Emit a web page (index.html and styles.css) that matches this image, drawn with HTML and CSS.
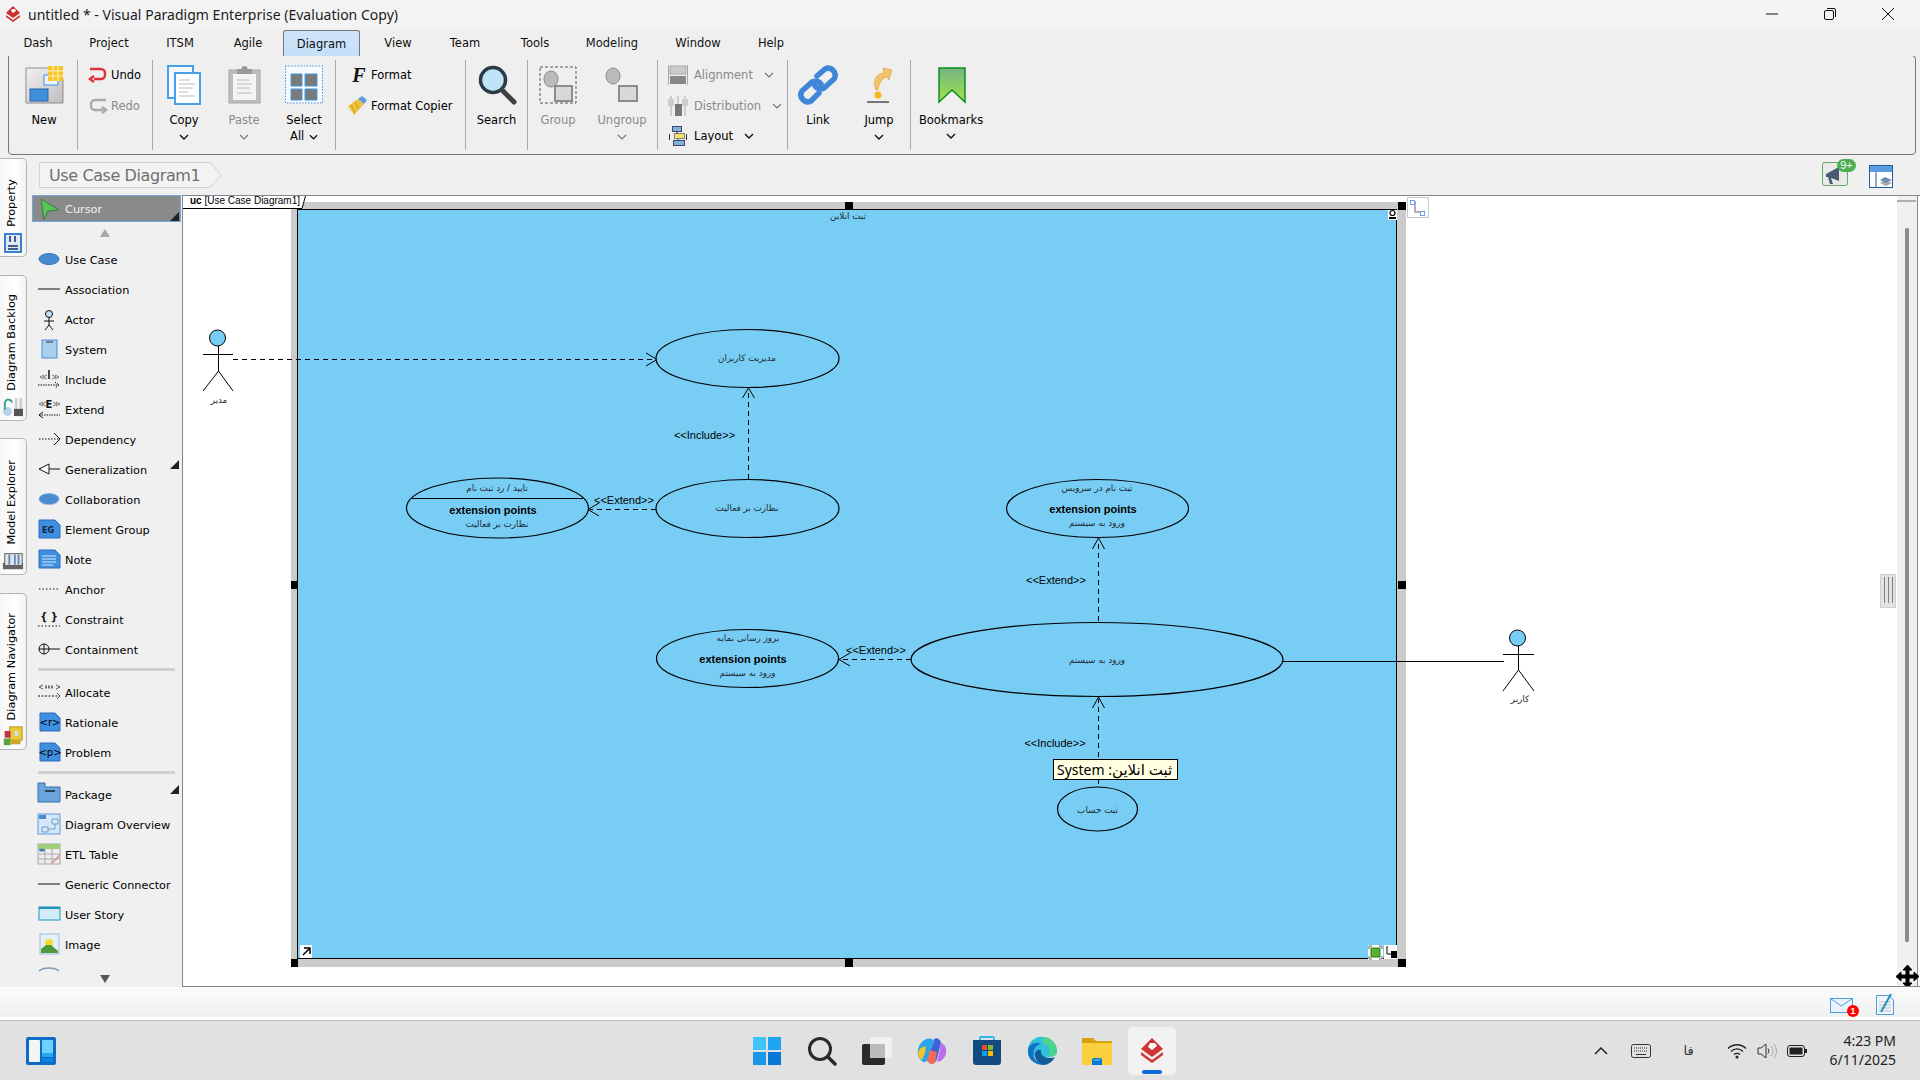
FILE: index.html
```html
<!DOCTYPE html>
<html lang="en">
<head>
<meta charset="utf-8">
<title>untitled * - Visual Paradigm Enterprise (Evaluation Copy)</title>
<link rel="stylesheet" href="styles.css">
</head>
<body>
<div class="app">
  <header class="titlebar">
    <svg class="applogo" viewBox="0 0 16 18"><path d="M8 1 15 8 8 13 1 8Z" fill="#c9302c"/><path d="M1 10 8 15 15 10 15 12 8 17 1 12Z" fill="#c9302c"/><path d="M7 4H10L11 6 8 8 6 6Z" fill="#fff"/></svg>
    <span class="apptitle">untitled * - Visual Paradigm Enterprise (Evaluation Copy)</span>
    <div class="winctl">
      <svg viewBox="0 0 14 14"><path d="M1 7H13" stroke="#111" fill="none"/></svg>
      <svg viewBox="0 0 14 14"><rect x="1.5" y="3.5" width="9" height="9" rx="1.5" fill="none" stroke="#111"/><path d="M4 1.5H11A1.5 1.5 0 0 1 12.5 3V10" fill="none" stroke="#111"/></svg>
      <svg viewBox="0 0 14 14"><path d="M1 1 13 13M13 1 1 13" stroke="#111" fill="none"/></svg>
    </div>
  </header>

  <nav class="tabs">
    <span class="tab w-dash">Dash</span><span class="tab w-project">Project</span><span class="tab w-itsm">ITSM</span><span class="tab w-agile">Agile</span><span class="tab tab-active">Diagram</span><span class="tab w-view">View</span><span class="tab w-team">Team</span><span class="tab w-tools">Tools</span><span class="tab w-modeling">Modeling</span><span class="tab w-window">Window</span><span class="tab w-help">Help</span>
  </nav>

  <section class="ribbon">
    <div class="group g-new">
      <div class="big w60">
        <svg class="bigicon" viewBox="0 0 40 40"><defs><linearGradient id="nw" x1="0" y1="0" x2="1" y2="1"><stop offset="0" stop-color="#f2f2f2"/><stop offset="1" stop-color="#bdbdbd"/></linearGradient></defs><path d="M2 3H27L39 14V38H2Z" fill="url(#nw)" stroke="#8d8d8d"/><rect x="6" y="24" width="18" height="12" fill="#3f8fdc" stroke="#2467a8"/><path d="M20 10H34V20H20Z" fill="#eef3fa" stroke="#3f8fdc"/><rect x="24" y="1" width="15" height="15" fill="#f6c52c"/><path d="M29 1V16M34 1V16M24 6H39M24 11H39" stroke="#fff3bb"/></svg>
        <span class="biglabel">New</span>
      </div>
    </div>
    <div class="group g-undo">
      <div class="rows">
        <div class="row"><svg class="smallicon" viewBox="0 0 20 16"><path d="M18 2H7A4 4 0 0 0 3 6V8A4 4 0 0 0 7 12H14M14 9 18 12 14 15" transform="matrix(-1 0 0 1 20 0)" fill="none" stroke="#e2303c" stroke-width="2.4"/></svg><span>Undo</span></div>
        <div class="row off"><svg class="smallicon" viewBox="0 0 20 16"><path d="M18 2H7A4 4 0 0 0 3 6V8A4 4 0 0 0 7 12H15M14 9 18 12 14 15" fill="none" stroke="#aaa" stroke-width="2.4"/></svg><span>Redo</span></div>
      </div>
    </div>
    <div class="group g-copy">
      <div class="big w60">
        <svg class="bigicon" viewBox="0 0 40 40"><rect x="4" y="1" width="25" height="32" fill="#f4f8fd" stroke="#46a0ea" stroke-width="2"/><rect x="11" y="8" width="25" height="31" fill="#fff" stroke="#46a0ea" stroke-width="2"/><path d="M15 15H26M15 19H31M15 23H29M15 27H24M15 31H31" stroke="#bbb"/></svg>
        <span class="biglabel">Copy</span>
        <svg class="chev" viewBox="0 0 10 6"><path d="M1 1 5 5 9 1" fill="none" stroke="#111" stroke-width="1.4"/></svg>
      </div>
      <div class="big w60 off">
        <svg class="bigicon" viewBox="0 0 40 40"><rect x="5" y="5" width="31" height="33" fill="#bdbdbd" stroke="#a5a5a5"/><rect x="9" y="9" width="23" height="26" fill="#f4f4f4"/><path d="M13 4H28V9H13Z" fill="#999"/><circle cx="20.500" cy="4" r="3" fill="#999"/><path d="M13 15H25M13 19H28M13 23H26M13 28H28" stroke="#bbb"/></svg>
        <span class="biglabel">Paste</span>
        <svg class="chev" viewBox="0 0 10 6"><path d="M1 1 5 5 9 1" fill="none" stroke="#777" stroke-width="1.2"/></svg>
      </div>
      <div class="big w60">
        <svg class="bigicon" viewBox="0 0 40 40"><rect x="1.500" y="1" width="37" height="37" fill="#f6f9fd" stroke="#4b8fe0" stroke-dasharray="1.500 1.500"/><path d="M7 9H18V21H7ZM21 9H33V21H21ZM7 24H18V35H7ZM21 24H33V35H21Z" fill="#7a7a7a" stroke="#3c9be8"/></svg>
        <span class="biglabel">Select<br>All <svg class="chev-inline" viewBox="0 0 10 6"><path d="M1 1 5 5 9 1" fill="none" stroke="#111" stroke-width="1.4"/></svg></span>
      </div>
    </div>
    <div class="group g-format">
      <div class="rows">
        <div class="row"><span class="fmt-f">F</span><span>Format</span></div>
        <div class="row"><svg class="smallicon w24" viewBox="0 0 20 20"><path d="M1 10 11 3 17 8 7 19Z" fill="#f0c23c"/><path d="M11 3 15 0 20 4 17 8Z" fill="#5d9be0"/><path d="M4 9 8 17M8 6 12 13" stroke="#c79a20"/></svg><span>Format Copier</span></div>
      </div>
    </div>
    <div class="group g-search">
      <div class="big wfull">
        <svg class="bigicon" viewBox="0 0 40 40"><circle cx="16" cy="15" r="12.500" fill="#bfe4f7" stroke="#2a3a46" stroke-width="3.500"/><path d="M25 25 37 37" stroke="#404040" stroke-width="5" stroke-linecap="round"/></svg>
        <span class="biglabel">Search</span>
      </div>
    </div>
    <div class="group g-group">
      <div class="big w60 off">
        <svg class="bigicon" viewBox="0 0 40 40"><rect x="2" y="2" width="36" height="36" fill="none" stroke="#555" stroke-dasharray="3 2"/><ellipse cx="13" cy="14" rx="7" ry="8" fill="#bbb" stroke="#8c8c8c"/><rect x="17" y="21" width="17" height="15" fill="#d8d8d8" stroke="#8c8c8c" stroke-width="2"/></svg>
        <span class="biglabel">Group</span>
      </div>
      <div class="big w68 off">
        <svg class="bigicon" viewBox="0 0 40 40"><ellipse cx="11" cy="11" rx="7" ry="8" fill="#bbb" stroke="#8c8c8c"/><rect x="17" y="21" width="18" height="15" fill="#d8d8d8" stroke="#8c8c8c" stroke-width="2"/></svg>
        <span class="biglabel">Ungroup</span>
        <svg class="chev" viewBox="0 0 10 6"><path d="M1 1 5 5 9 1" fill="none" stroke="#777" stroke-width="1.2"/></svg>
      </div>
    </div>
    <div class="group g-align">
      <div class="rows">
        <div class="row off"><svg class="smallicon w26" viewBox="0 0 20 20"><path d="M.5 0V20M19.500 0V20" stroke="#aaa"/><rect x="2" y="1" width="16" height="8" fill="#ccc" stroke="#aaa"/><rect x="2" y="11" width="16" height="8" fill="#888"/></svg><span>Alignment</span><svg class="chev-row" viewBox="0 0 10 6"><path d="M1 1 5 5 9 1" fill="none" stroke="#777" stroke-width="1.2"/></svg></div>
        <div class="row off"><svg class="smallicon w26" viewBox="0 0 20 20"><path d="M3 0V20M10 0V20M17 0V20" stroke="#aaa"/><rect x="0" y="3" width="6" height="7" fill="#ccc"/><rect x="7" y="8" width="7" height="12" fill="#777"/><rect x="14" y="3" width="6" height="7" fill="#ccc"/></svg><span>Distribution</span><svg class="chev-row" viewBox="0 0 10 6"><path d="M1 1 5 5 9 1" fill="none" stroke="#777" stroke-width="1.2"/></svg></div>
        <div class="row"><svg class="smallicon w26" viewBox="0 0 20 20"><rect x="4.500" y=".5" width="9" height="5" fill="#7fb2d8" stroke="#447"/><rect x="6.500" y="7.500" width="10" height="5" fill="#f2e27a" stroke="#886"/><rect x="5.500" y="14.500" width="11" height="5" fill="#7fb2d8" stroke="#447"/><path d="M9 5V8M10 13V15M1.500 8V14M18.500 8V14" stroke="#333"/></svg><span>Layout</span><svg class="chev-row" viewBox="0 0 10 6"><path d="M1 1 5 5 9 1" fill="none" stroke="#111" stroke-width="1.4"/></svg></div>
      </div>
    </div>
    <div class="group g-link">
      <div class="big w60">
        <svg class="bigicon" viewBox="0 0 40 40"><g fill="none" stroke="#3f86d8" stroke-width="5.500" stroke-linecap="round"><path d="M19 11 27 4A7 7 0 0 1 36 14L26 23A7 7 0 0 1 17 21"/><path d="M21 28 13 36A7 7 0 0 1 4 26L14 17A7 7 0 0 1 23 19"/></g></svg>
        <span class="biglabel">Link</span>
      </div>
      <div class="big w62">
        <svg class="bigicon" viewBox="0 0 40 40"><path d="M17 25C13 15 17 9 25 8L24 3 33 5 30 15 28 12C23 13 20 18 19 25Z" fill="#f2c26a" stroke="#e0a030" stroke-width=".6"/><circle cx="19" cy="30" r="3.500" fill="#f4b81c"/><rect x="8" y="36" width="22" height="2" fill="#777"/></svg>
        <span class="biglabel">Jump</span>
        <svg class="chev" viewBox="0 0 10 6"><path d="M1 1 5 5 9 1" fill="none" stroke="#111" stroke-width="1.4"/></svg>
      </div>
    </div>
    <div class="group g-book">
      <div class="big w80">
        <svg class="bigicon bookicon" viewBox="0 0 40 40"><defs><linearGradient id="bk" x1="0" y1="0" x2="0" y2="1"><stop offset="0" stop-color="#76b587"/><stop offset="1" stop-color="#9fe04a"/></linearGradient></defs><path d="M7 3H33V37L20 25 7 37Z" fill="url(#bk)" stroke="#0f8f1e" stroke-width="1.500"/></svg>
        <span class="biglabel bk-label">Bookmarks</span>
        <svg class="chev chev-up" viewBox="0 0 10 6"><path d="M1 1 5 5 9 1" fill="none" stroke="#111" stroke-width="1.4"/></svg>
      </div>
    </div>
  </section>

  <div class="crumbbar">
    <div class="crumb">
      <svg class="crumbshape" viewBox="0 0 183 26"><path d="M.5.5H171L182 13 171 25.500H.5Z" fill="#f3f3f3" stroke="#d2d2d2"/></svg>
      <span class="crumbtext">Use Case Diagram1</span>
    </div>
    <div class="crumbtools">
      <div class="announce">
        <svg viewBox="0 0 26 24"><rect x=".5" y=".5" width="25" height="23" rx="2" fill="#e9e9e9" stroke="#6aa868"/><path d="M4 12 17 5V19L9 16 11 22H8L6 15H4Z" fill="#4a5a70"/></svg>
        <span class="badge9">9+</span>
      </div>
      <svg class="panelicon" viewBox="0 0 24 24"><rect x=".5" y=".5" width="23" height="22" fill="#fff" stroke="#1f5f9f"/><rect x="1" y="1" width="22" height="6" fill="#5c9be0"/><path d="M7 7V23" stroke="#1f5f9f"/><path d="M16 15 23 18 17 21 11 18Z" fill="#aaa"/><path d="M16 12 23 15 17 18 11 15Z" fill="#6f8fb8"/></svg>
    </div>
  </div>

  <main class="workspace">
    <aside class="sidetabs">
      <div class="stab s-prop"><span class="stext">Property</span>
        <svg viewBox="0 0 18 20"><rect width="18" height="20" fill="#3a7fd0"/><rect x="2" y="2" width="14" height="16" fill="#e4e8ee"/><path d="M6 3V9M11 3V9M4 13H14M4 16H14" stroke="#3a5f90" stroke-width="2"/></svg></div>
      <div class="stab s-back"><span class="stext">Diagram Backlog</span>
        <svg viewBox="0 0 24 22"><circle cx="6" cy="16" r="5" fill="#b8d4ea"/><path d="M3 14V8A4 4 0 0 1 11 6" fill="none" stroke="#2f9f92" stroke-width="2"/><path d="M14 1H17V21H14ZM19 1H22V21H19Z" fill="#cfcfcf"/><path d="M13 13H23V21H13Z" fill="#555"/></svg></div>
      <div class="stab s-model"><span class="stext">Model Explorer</span>
        <svg viewBox="0 0 24 20"><rect x="1" y="12" width="22" height="7" fill="#666"/><rect x="3" y="2" width="19" height="13" fill="#e5e5e5" stroke="#555"/><path d="M8 3V14M14 3V14M18 3V14" stroke="#5b88bd" stroke-width="2"/></svg></div>
      <div class="stab s-nav"><span class="stext">Diagram Navigator</span>
        <svg viewBox="0 0 24 24"><rect x="8" y="1" width="15" height="16" fill="#e7c93a" stroke="#a58a1f"/><rect x="2" y="6" width="7" height="8" fill="#c2314a"/><rect x="1" y="15" width="8" height="8" fill="#5aa33c"/><rect x="9" y="17" width="12" height="5" fill="#c9a62c"/><rect x="14" y="6" width="4" height="6" fill="#cfe0ef"/></svg></div>
    </aside>

    <aside class="palette">
      <div class="pcursor">
        <svg class="picon" viewBox="0 0 24 24"><path d="M4 2 22 13 11 14 7 23Z" fill="#59c35c" stroke="#3c7c40"/></svg><span>Cursor</span><i class="corner"></i>
      </div>
      <div class="parrow"><i class="tri-up"></i></div>
      <div class="pitem"><svg class="picon" viewBox="0 0 24 24"><ellipse cx="12" cy="12" rx="10" ry="5.500" fill="#4a8bd0" stroke="#3878bf"/></svg><span>Use Case</span></div>
      <div class="pitem"><svg class="picon" viewBox="0 0 24 24"><path d="M1 12H23" stroke="#111"/></svg><span>Association</span></div>
      <div class="pitem"><svg class="picon" viewBox="0 0 24 24"><circle cx="12" cy="7" r="3.500" fill="#bfe0f5" stroke="#111"/><path d="M12 10V18M7 14H17M12 18 8 23M12 18 16 23" stroke="#111" fill="none"/></svg><span>Actor</span></div>
      <div class="pitem"><svg class="picon" viewBox="0 0 24 24"><rect x="5" y="3" width="15" height="18" fill="#a9d0ef" stroke="#4a8bd0"/><path d="M9 5H16" stroke="#333"/></svg><span>System</span></div>
      <div class="pitem"><svg class="picon" viewBox="0 0 24 24"><path d="M12 3V12" stroke="#111" stroke-width="1.500"/><path d="M7 7 3 9 7 11M10 7 6 9 10 11M15 7 19 9 15 11M18 7 22 9 18 11" transform="translate(0,1)" stroke="#777" fill="none"/><path d="M1 18H22M18 15 22 18 18 21" stroke="#111" stroke-dasharray="1.500 1" fill="none"/></svg><span>Include</span></div>
      <div class="pitem"><svg class="picon" viewBox="0 0 24 24"><text class="icn-t" x="12" y="11">E</text><path d="M6 5 2 7 6 9M9 5 5 7 9 9M16 5 20 7 16 9M19 5 23 7 19 9" stroke="#777" fill="none"/><path d="M2 18H23" stroke="#111" stroke-dasharray="1.500 1"/><path d="M6 15 2 18 6 21" stroke="#111" fill="none"/></svg><span>Extend</span></div>
      <div class="pitem"><svg class="picon" viewBox="0 0 24 24"><path d="M2 12H22" stroke="#111" stroke-dasharray="1.500 1.500"/><path d="M17 6 23 12 17 18" stroke="#111" fill="none"/></svg><span>Dependency</span></div>
      <div class="pitem"><i class="corner"></i><svg class="picon" viewBox="0 0 24 24"><path d="M12 7V17L2 12Z" fill="#fff" stroke="#111"/><path d="M12 12H23" stroke="#111"/></svg><span>Generalization</span></div>
      <div class="pitem"><svg class="picon" viewBox="0 0 24 24"><ellipse cx="12" cy="12" rx="10" ry="5.500" fill="#4a8bd0" stroke="#8ab4e0" stroke-dasharray="2 1"/></svg><span>Collaboration</span></div>
      <div class="pitem"><svg class="picon" viewBox="0 0 24 24"><path d="M2 3H18L23 8V21H2Z" fill="#3f8fe0" stroke="#2a6db8"/><text class="icn-t small" x="11" y="16">EG</text></svg><span>Element Group</span></div>
      <div class="pitem"><svg class="picon" viewBox="0 0 24 24"><path d="M2 3H18L23 8V21H2Z" fill="#3f8fe0" stroke="#2a6db8"/><path d="M5 9H19M5 12H19M5 15H19M5 18H16" stroke="#dcebfa"/></svg><span>Note</span></div>
      <div class="pitem"><svg class="picon" viewBox="0 0 24 24"><path d="M2 12H23" stroke="#111" stroke-dasharray="1.500 2"/></svg><span>Anchor</span></div>
      <div class="pitem"><svg class="picon" viewBox="0 0 24 24"><path d="M1 19H23" stroke="#111" stroke-dasharray="1.500 2"/><text class="icn-t" x="12" y="13">{ }</text></svg><span>Constraint</span></div>
      <div class="pitem"><svg class="picon" viewBox="0 0 24 24"><circle cx="7" cy="12" r="5" fill="none" stroke="#111"/><path d="M2 12H23M7 7V17" stroke="#111"/></svg><span>Containment</span></div>
      <div class="psep first"></div>
      <div class="pitem"><svg class="picon" viewBox="0 0 24 24"><path d="M6 5 2 7 6 9M19 5 23 7 19 9" stroke="#555" fill="none"/><path d="M8 7H17" stroke="#777" stroke-width="3" stroke-dasharray="2 1"/><path d="M1 16H23" stroke="#111" stroke-dasharray="2 1.500"/><path d="M20 13 23 16 20 19" stroke="#555" fill="none"/></svg><span>Allocate</span></div>
      <div class="pitem"><svg class="picon" viewBox="0 0 24 24"><path d="M3 3H18L23 8V21H3Z" fill="#3f8fe0" stroke="#2a6db8"/><text class="icn-t dark" x="13" y="16">&lt;r&gt;</text></svg><span>Rationale</span></div>
      <div class="pitem"><svg class="picon" viewBox="0 0 24 24"><path d="M3 3H18L23 8V21H3Z" fill="#3f8fe0" stroke="#2a6db8"/><text class="icn-t dark" x="13" y="16">&lt;p&gt;</text></svg><span>Problem</span></div>
      <div class="psep"></div>
      <div class="pitem"><i class="corner"></i><svg class="picon" viewBox="0 0 24 24"><path d="M1 1H8V5H23V20H1Z" fill="#6ba4dc" stroke="#3a6ea8"/><path d="M8 9H18" stroke="#123" stroke-width="1.500"/></svg><span>Package</span></div>
      <div class="pitem"><svg class="picon" viewBox="0 0 24 24"><rect x="1" y="2" width="22" height="20" fill="#d6e8f8" stroke="#5a9be0"/><rect x="2" y="3" width="7" height="4" fill="#4a8bd0"/><path d="M15 7H21V12H15ZM5 15H11V20H5ZM11 17H18V12" fill="none" stroke="#6d9ac8"/></svg><span>Diagram Overview</span></div>
      <div class="pitem"><svg class="picon" viewBox="0 0 24 24"><rect x="1" y="2" width="22" height="20" fill="#eee" stroke="#aaa"/><rect x="1" y="2" width="22" height="5" fill="#9fce78"/><path d="M1 12H23M1 17H23M8 7V22M15 7V22" stroke="#aaa"/><ellipse cx="5" cy="8" rx="3" ry="1.500" fill="#4a7bb0"/><path d="M15 21 23 13" stroke="#d88" stroke-width="1.500"/></svg><span>ETL Table</span></div>
      <div class="pitem"><svg class="picon" viewBox="0 0 24 24"><path d="M1 12H23" stroke="#111"/></svg><span>Generic Connector</span></div>
      <div class="pitem"><svg class="picon" viewBox="0 0 24 24"><rect x="2" y="5" width="21" height="13" fill="#d2ecf8" stroke="#1c95be"/><rect x="2" y="5" width="21" height="2" fill="#1c95be"/></svg><span>User Story</span></div>
      <div class="pitem"><svg class="picon" viewBox="0 0 24 24"><rect x="3" y="2" width="19" height="20" fill="#e4eff8" stroke="#9cc0de"/><circle cx="12" cy="11" r="4" fill="#f3dc2e"/><path d="M4 21V17L9 13 14 13 21 19V21Z" fill="#4f9a3c"/></svg><span>Image</span></div>
      <div class="ppartial"><svg class="picon" viewBox="0 0 24 24"><path d="M2 4C7 0 17 0 22 4" fill="none" stroke="#7d9ab5" stroke-width="1.500"/></svg></div>
      <div class="parrow down"><i class="tri-down"></i></div>
    </aside>

    <section class="canvas">
      <svg class="diagram" viewBox="183 196 1737 790">
        <rect class="band" x="291" y="209" width="7" height="758"/>
        <rect class="band" x="299" y="202" width="1107" height="7"/>
        <rect class="band" x="1397" y="209" width="9" height="758"/>
        <rect class="band" x="291" y="959" width="1115" height="8"/>
        <rect class="sysbox" x="297.500" y="209.500" width="1099" height="749"/>
        <path class="tabfill" d="M183 196H306L302 208H183Z"/>
        <path class="ln" d="M183 208.500H302L305.500 196"/>
        <text class="uc" x="190" y="204"><tspan class="ucb">uc</tspan> [Use Case Diagram1]</text>

        <rect class="handle" x="845" y="202" width="8" height="8"/>
        <rect class="handle" x="1398" y="202" width="8" height="8"/>
        <rect class="handle" x="291" y="581" width="7" height="8"/>
        <rect class="handle" x="1398" y="581" width="8" height="8"/>
        <rect class="handle" x="291" y="959" width="7" height="8"/>
        <rect class="handle" x="845" y="959" width="8" height="8"/>
        <rect class="handle" x="1398" y="959" width="8" height="8"/>

        <text class="fa" x="848" y="219">ثبت انلاین</text>

        <circle class="head" cx="217.500" cy="338" r="8"/>
        <path class="ln" d="M218.500 346V371M203 354.500H233M218.500 371 203 391M218.500 371 233 391"/>
        <text class="fa" x="219" y="403">مدیر</text>
        <circle class="head" cx="1517.500" cy="638" r="8"/>
        <path class="ln" d="M1518.500 646V670M1503 654.500H1534M1518.500 670 1503 691M1518.500 670 1534 691"/>
        <text class="fa" x="1520" y="702">کاربر</text>

        <path class="dash" d="M233 359.500H654"/>
        <path class="ln" d="M646 353 657 359.500 646 366"/>
        <ellipse class="uce" cx="747.500" cy="358.500" rx="91.500" ry="29"/>
        <text class="fa" x="747" y="361">مدیریت کاربران</text>

        <ellipse class="uce" cx="747.500" cy="508.500" rx="91.500" ry="29"/>
        <text class="fa" x="747" y="511">نظارت بر فعالیت</text>
        <path class="dash" d="M748.500 479V390"/>
        <path class="ln" d="M742.500 398 748.500 388 754.500 398"/>
        <text class="lbl" x="704.500" y="439">&lt;&lt;Include&gt;&gt;</text>

        <ellipse class="uce" cx="497.500" cy="508" rx="91" ry="30"/>
        <path class="ln" d="M412 498.500H583"/>
        <text class="fa" x="497" y="491">تایید / رد ثبت نام</text>
        <text class="lbl bold" x="493" y="514">extension points</text>
        <text class="fa" x="497" y="527">نظارت بر فعالیت</text>
        <path class="dash" d="M656 509.500H590"/>
        <path class="ln" d="M599 503 588 509.500 599 516"/>
        <text class="lbl" x="624" y="504">&lt;&lt;Extend&gt;&gt;</text>

        <ellipse class="uce" cx="1097.500" cy="508.500" rx="91" ry="29"/>
        <text class="fa" x="1097" y="491">ثبت نام در سرویس</text>
        <text class="lbl bold" x="1093" y="513">extension points</text>
        <text class="fa" x="1097" y="526">ورود به سیستم</text>
        <path class="dash" d="M1098.500 621V540"/>
        <path class="ln" d="M1092.500 549 1098.500 538 1104.500 549"/>
        <text class="lbl" x="1056" y="584">&lt;&lt;Extend&gt;&gt;</text>

        <ellipse class="uce" cx="1097" cy="659.500" rx="186" ry="37"/>
        <text class="fa" x="1097" y="663">ورود به سیستم</text>
        <path class="ln" d="M1283 661.500H1504"/>

        <ellipse class="uce" cx="747.500" cy="658.500" rx="91" ry="29"/>
        <text class="fa" x="748" y="641">بروز رسانی نمایه</text>
        <text class="lbl bold" x="743" y="663">extension points</text>
        <text class="fa" x="747.500" y="676">ورود به سیستم</text>
        <path class="dash" d="M911 659.500H841"/>
        <path class="ln" d="M850 653 839 659.500 850 666"/>
        <text class="lbl" x="876" y="654">&lt;&lt;Extend&gt;&gt;</text>

        <path class="dash" d="M1098.500 757V699"/>
        <path class="ln" d="M1092.500 708 1098.500 697 1104.500 708"/>
        <text class="lbl" x="1055" y="747">&lt;&lt;Include&gt;&gt;</text>
        <path class="dash" d="M1098.500 779V788"/>
        <ellipse class="uce" cx="1097.500" cy="809" rx="40" ry="22"/>
        <text class="fa" x="1097.500" y="813">ثبت حساب</text>

        <rect class="tip" x="1053.500" y="759.500" width="124" height="20"/>
        <text class="tiptext" x="1057" y="775">System :<tspan class="tipfa">ثبت انلاین</tspan></text>

        <rect class="white" x="1388" y="210" width="9" height="10"/>
        <circle class="ico" cx="1392.500" cy="213" r="2.500"/><path class="ico-l" d="M1389 218H1396"/>
        <rect class="gbox" x="1407.500" y="197.500" width="21" height="20"/>
        <path class="gpath" d="M1415 201V212H1421"/>
        <rect class="bluebox" x="1410.500" y="200.500" width="4" height="4"/><rect class="bluebox" x="1420.500" y="211.500" width="4" height="4"/>
        <rect class="white" x="300" y="945" width="12" height="13"/>
        <path class="ln thick" d="M303 955 309 949M304 948H310V954"/>
        <rect class="white" x="1368" y="945" width="15" height="15"/>
        <rect class="green" x="1371" y="948" width="9" height="9"/>
        <path class="gcorner" d="M1369 949V946H1372M1379 946H1382V949M1382 956V959H1379M1372 959H1369V956"/>
        <rect class="white" x="1384" y="945" width="13" height="14"/>
        <path class="ln" d="M1387 946V954H1395"/><rect class="handle" x="1391" y="951" width="6" height="7"/>

        <rect class="gripbox" x="1880.500" y="574.500" width="15" height="33"/>
        <path class="gripl" d="M1884.500 577V603M1888.500 577V603M1892.500 577V603"/>
        <rect class="sbar" x="1897" y="196" width="20" height="790"/>
        <rect class="sthumb" x="1905" y="228" width="4" height="714" rx="1.500"/>
        <path class="sedge" d="M1917.500 196V986"/>
        <path class="gpath" d="M1897 201H1916"/>
        <rect class="sbar" x="1897" y="963" width="20" height="23"/>
        <path class="moveico" d="M1907.500 966 1912 971H1909V976H1914V973L1919 977.500 1914 982V979H1909V984H1912L1907.500 989 1903 984H1906V979H1901V982L1896 977.500 1901 973V976H1906V971H1903Z" transform="translate(0,-1)"/>
      </svg>
    </section>
  </main>

  <footer class="statusbar">
    <div class="mail">
      <svg viewBox="0 0 24 16"><rect x=".5" y=".5" width="22" height="14" fill="#eaf3fc" stroke="#4e9be0"/><path d="M.5 .5 11.500 8 22.500 .5" fill="none" stroke="#4e9be0"/></svg>
      <span class="mailbadge">1</span>
    </div>
    <svg class="noteico" viewBox="0 0 18 22"><path d="M.5 2.500H13L17.500 7V21.500H.5Z" fill="#f2f6fa" stroke="#4e9be0"/><path d="M3 9H15M3 12H15M3 15H15M3 18H15" stroke="#bbb"/><path d="M5 19 15 1" stroke="#1c95be" stroke-width="2"/></svg>
  </footer>
  <div class="gap"></div>

  <footer class="taskbar">
    <svg class="widgetico" viewBox="0 0 30 28"><rect width="30" height="28" rx="2" fill="#0e6cc4"/><rect x="3" y="3" width="11" height="22" rx="1" fill="#f4f4f4"/><rect x="16" y="3" width="11" height="13" fill="#6bd2ff"/><rect x="16" y="16" width="11" height="4" fill="#2aa5f2"/><rect x="16" y="21" width="11" height="4" fill="#0a84e4"/></svg>
    <div class="center">
      <svg class="tbi" viewBox="0 0 30 30"><path d="M1 1H14V14H1Z" fill="#3cc4fb"/><path d="M16 1H29V14H16Z" fill="#1fa5ef"/><path d="M1 16H14V29H1Z" fill="#1a97e8"/><path d="M16 16H29V29H16Z" fill="#0a78d6"/></svg>
      <svg class="tbi" viewBox="0 0 30 30"><circle cx="13" cy="13" r="10.500" fill="none" stroke="#2a2a2a" stroke-width="3"/><path d="M21 21 28 28" stroke="#2a2a2a" stroke-width="3.500" stroke-linecap="round"/></svg>
      <svg class="tbi" viewBox="0 0 30 30"><rect x="0" y="8" width="23" height="21" rx="2" fill="#2b2b2b"/><rect x="8" y="1" width="22" height="21" rx="2" fill="#f3f3f3" fill-opacity=".9"/><rect x="8" y="8" width="15" height="14" fill="#bcbcbc"/></svg>
      <svg class="tbi" viewBox="0 0 30 30"><path d="M5 6C8 2 15 1 17 5L10 24C8 29 2 24 1 19 0 14 2 9 5 6Z" fill="#2ba4e8"/><path d="M17 3C20 1 24 4 24 7L20 23C18 29 12 29 10 24L17 5Z" fill="#3f62d8"/><path d="M24 7C28 8 30 13 29 17 28 22 25 25 20 26L23 14Z" fill="#b96cf0"/><path d="M1 17C2 12 6 10 9 11L8 17 5 24C3 23 1 20 1 17Z" fill="#f2c628"/><path d="M10 24 13 14 20 16 18 27C15 29 12 28 10 24Z" fill="#f26b56"/></svg>
      <svg class="tbi" viewBox="0 0 30 30"><path d="M8 5V2A1 1 0 0 1 9 1H21A1 1 0 0 1 22 2V5" fill="none" stroke="#2bb8ee" stroke-width="1.800"/><path d="M1 4H29V26A3 3 0 0 1 26 29H4A3 3 0 0 1 1 26Z" fill="#124a82"/><rect x="10" y="9" width="5" height="5" fill="#ef4f22"/><rect x="16" y="9" width="5" height="5" fill="#7fba2a"/><rect x="10" y="15" width="5" height="5" fill="#03a4ef"/><rect x="16" y="15" width="5" height="5" fill="#ffb901"/></svg>
      <svg class="tbi" viewBox="0 0 30 30"><path d="M1 13C2 5 9 0 16 1 24 1 30 8 30 15 30 20 26 21 20 21 15 21 13 19 14 16 8 15 5 22 9 27 3 25 0 19 1 13Z" fill="#2fc2d8"/><path d="M16 1C24 1 30 8 30 15 30 20 26 21 22 20 25 13 20 6 16 8Z" fill="#4ed38a"/><path d="M1 15C1 8 9 5 14 8 9 9 5 14 7 21 9 26 15 29 21 28 16 31 1 28 1 15Z" fill="#0d74c6"/><path d="M8 21C7 15 11 13 14 14 13 19 17 22 24 22 27 22 28 21 28 21 25 27 19 30 14 28 11 27 9 24 8 21Z" fill="#115a9c"/></svg>
      <svg class="tbi" viewBox="0 0 30 30"><path d="M0 2H11L14 5H30V28H0Z" fill="#d6a00e"/><path d="M0 7H30V29H0Z" fill="#fbd040"/><path d="M10 24A2 2 0 0 1 12 22H18A2 2 0 0 1 20 24V29H10Z" fill="#0a78d6"/><path d="M12 24H18" stroke="#7fd0ff"/></svg>
      <div class="tbactive">
        <svg viewBox="0 0 24 28"><path d="M12 1 23 12 12 20 1 12Z" fill="#cd3532"/><path d="M1 15 12 23 23 15V18L12 26 1 18Z" fill="#cd3532"/><path d="M10 6H15L17 9 12 13 8 10Z" fill="#fff"/></svg>
        <i class="tbdot"></i>
      </div>
    </div>
    <div class="tray">
      <svg class="tr-chev" viewBox="0 0 14 8"><path d="M1 7 7 1 13 7" fill="none" stroke="#222" stroke-width="1.500"/></svg>
      <svg class="tr-key" viewBox="0 0 20 14"><rect x=".5" y=".5" width="19" height="13" rx="2" fill="none" stroke="#333"/><path d="M3 4H17M3 7H17" stroke="#333" stroke-dasharray="1 1"/><path d="M5 10.500H15" stroke="#333"/></svg>
      <span class="tr-fa">فا</span>
      <svg class="tr-wifi" viewBox="0 0 20 16"><path d="M1 5.500C6 .5 14 .5 19 5.500M4 8.500C7.500 5 12.500 5 16 8.500M7 11.500C8.500 10 11.500 10 13 11.500" fill="none" stroke="#222" stroke-width="1.400"/><circle cx="10" cy="14" r="1.500" fill="#222"/></svg>
      <svg class="tr-vol" viewBox="0 0 20 16"><path d="M1 5H4L9 1V15L4 11H1Z" fill="none" stroke="#333"/><path d="M11 5.500A4 4 0 0 1 11 10.500" fill="none" stroke="#333"/><path d="M14 3A8 8 0 0 1 14 13M17 1A11 11 0 0 1 17 15" fill="none" stroke="#aaa"/></svg>
      <svg class="tr-bat" viewBox="0 0 20 12"><rect x=".5" y=".5" width="17" height="11" rx="2.500" fill="none" stroke="#222"/><rect x="2.500" y="2.500" width="13" height="7" rx="1" fill="#222"/><rect x="18" y="4" width="2" height="4" fill="#222"/></svg>
      <div class="clock"><span>4:23 PM</span><span>6/11/2025</span></div>
    </div>
  </footer>
</div>
</body>
</html>
```

FILE: styles.css
```css
* { box-sizing: border-box; }
html, body { margin: 0; padding: 0; }
body { width: 1920px; height: 1080px; overflow: hidden; background: #f0f0f0; color: #000; font: 11.5px "DejaVu Sans", sans-serif; }
.app { width: 1920px; height: 1080px; display: flex; flex-direction: column; }
svg { display: block; flex: none; }

.titlebar { height: 28px; background: #f3f3f3; display: flex; align-items: center; padding-left: 5px; }
.applogo { width: 16px; height: 18px; }
.apptitle { margin-left: 7px; font: 14px "Noto Sans", sans-serif; color: #1c1c1c; letter-spacing: .02px; }
.winctl { margin-left: auto; display: flex; padding-right: 25px; gap: 44px; }
.winctl svg { width: 14px; height: 14px; }

.tabs { height: 28px; background: #efefef; display: flex; align-items: flex-end; padding-left: 8px; position: relative; z-index: 1; }
.tab { height: 26px; line-height: 27px; text-align: center; flex: none; color: #111; }
.w-dash { width: 60px; } .w-project { width: 82px; } .w-itsm { width: 60px; } .w-agile { width: 73px; padding-left: 3px; }
.tab-active { width: 77px; background: linear-gradient(#cfe4f8, #c4dff8); border: 1px solid #777; border-bottom: 0; border-radius: 3px 3px 0 0; }
.w-view { width: 76px; } .w-team { width: 58px; } .w-tools { width: 82px; } .w-modeling { width: 72px; } .w-window { width: 100px; } .w-help { width: 46px; }

.ribbon { height: 100px; margin: -1px 4px 0 8px; border: 1px solid #777; border-radius: 0 4px 4px 4px; background: #efefef; display: flex; padding-top: 4px; }
.group { height: 90px; border-right: 1px solid #aaa; display: flex; flex: none; }
.g-new { width: 69px; padding-left: 5px; }
.g-undo { width: 75px; padding-left: 10px; }
.g-copy { width: 183px; padding-left: 1px; }
.g-format { width: 130px; padding-left: 11px; }
.g-search { width: 62px; }
.g-group { width: 130px; }
.g-align { width: 130px; padding-left: 10px; }
.g-link { width: 123px; }
.g-book { border-right: 0; }

.big { display: flex; flex-direction: column; align-items: center; padding-top: 5px; flex: none; }
.w60 { width: 60px; } .w62 { width: 62px; } .w68 { width: 68px; } .w80 { width: 80px; } .wfull { width: 100%; }
.bigicon { width: 40px; height: 40px; }
.bookicon { margin-left: 2px; }
.biglabel { margin-top: 7px; line-height: 16px; text-align: center; }
.chev { width: 10px; height: 6px; margin-top: 6px; }
.chev-up { margin-top: 5px; }
.chev-inline { display: inline-block; width: 9px; height: 6px; margin-left: 1px; }
.chev-row { width: 10px; height: 6px; margin-left: 11px; }
.off { color: #8a8a8a; }

.rows { display: flex; flex-direction: column; gap: 3px; padding-top: 1px; }
.row { height: 28px; display: flex; align-items: center; white-space: nowrap; }
.smallicon { width: 20px; height: 16px; margin-right: 3px; }
.smallicon.w24 { width: 20px; height: 20px; margin-right: 4px; }
.smallicon.w26 { width: 20px; height: 20px; margin-right: 6px; }
.fmt-f { width: 24px; text-align: center; font: italic bold 20px "Liberation Serif", serif; color: #111; }

.crumbbar { height: 40px; display: flex; align-items: flex-start; padding: 7px 27px 0 39px; }
.crumb { width: 183px; height: 26px; position: relative; padding-left: 10px; }
.crumbshape { position: absolute; left: 0; top: 0; width: 183px; height: 26px; }
.crumbtext { position: relative; display: block; padding-top: 1px; font: 16px/26px "DejaVu Sans", sans-serif; color: #707070; letter-spacing: -.4px; white-space: nowrap; }
.crumbtools { margin-left: auto; display: flex; align-items: flex-start; gap: 21px; }
.announce { position: relative; width: 26px; height: 24px; }
.announce svg { width: 26px; height: 24px; }
.badge9 { position: absolute; left: 15px; top: -3px; width: 19px; height: 13px; border-radius: 7px; background: #4caf50; color: #fff; font: 11px/13px "Liberation Sans", sans-serif; text-align: center; }
.panelicon { width: 24px; height: 24px; margin-top: 3px; }

.workspace { height: 792px; display: flex; }
.sidetabs { width: 30px; flex: none; display: flex; flex-direction: column; margin-top: -37px; }
.stab { width: 27px; border: 1px solid #b5b5b5; border-left: 0; border-radius: 0 5px 5px 0; background: linear-gradient(90deg, #f6f6f6, #fff 60%, #f2f2f2); display: flex; flex-direction: column; align-items: center; padding-bottom: 3px; flex: none; }
.stext { writing-mode: vertical-rl; transform: rotate(180deg); font: 11.3px "DejaVu Sans", sans-serif; white-space: nowrap; margin-top: auto; margin-right: 3px; }
.stab svg { width: 22px; height: 20px; margin-top: 6px; }
.s-prop { height: 99px; }
.s-back { height: 146px; margin-top: 18px; }
.s-model { height: 137px; margin-top: 17px; }
.s-nav { height: 157px; margin-top: 18px; }

.palette { width: 153px; flex: none; display: flex; flex-direction: column; border-right: 1px solid #85858f; padding-left: 2px; overflow: hidden; font-size: 11.3px; }
.palette span { padding-top: 2px; }
.pcursor { height: 27px; width: 149px; display: flex; align-items: center; background: #8a8a8a; border: 1px solid #70a5e0; color: #f0f0f0; position: relative; padding-left: 4px; flex: none; }
.pcursor .picon { margin-right: 4px; }
.parrow { height: 22px; display: flex; align-items: center; justify-content: center; flex: none; width: 146px; }
.parrow.down { height: 16px; margin-top: -4px; }
.tri-up { width: 0; height: 0; border: 5.500px solid transparent; border-top: 0; border-bottom: 8px solid #a8a8a8; }
.tri-down { width: 0; height: 0; border: 5.500px solid transparent; border-bottom: 0; border-top: 8px solid #555; }
.pitem { height: 30px; display: flex; align-items: center; padding-left: 5px; position: relative; white-space: nowrap; flex: none; }
.picon { width: 24px; height: 24px; margin-right: 4px; }
.corner { position: absolute; left: 138px; bottom: 2px; width: 9px; height: 9px; background: #222; clip-path: polygon(100% 0, 100% 100%, 0 100%); }
.pitem .corner { bottom: auto; top: 6px; left: 138px; }
.pcursor .corner { left: 137px; bottom: 0; }
.psep { height: 3px; width: 137px; margin: 4px 0 5px 6px; background: #cfcfcf; flex: none; }
.psep.first { margin-bottom: 6px; }
.ppartial { height: 8px; overflow: hidden; padding-left: 5px; margin-top: 8px; flex: none; }
.icn-t { font: bold 10px "DejaVu Sans", sans-serif; text-anchor: middle; fill: #111; }
.icn-t.small { font-size: 8px; fill: #123; }
.icn-t.dark { font-size: 10px; font-weight: normal; fill: #000; }

.canvas { flex: 1; border-top: 1px solid #85858f; border-bottom: 1px solid #85858f; background: #fff; overflow: hidden; }
.diagram { width: 1737px; height: 790px; }
.band { fill: #cbcbcb; }
.sysbox { fill: #78cdf5; stroke: #000; }
.tabfill { fill: #fff; }
.uc { font: 10px "Liberation Sans", sans-serif; }
.ucb { font-weight: bold; }
.handle { fill: #000; }
.head { fill: #78cdf5; stroke: #000; }
.ln { fill: none; stroke: #000; }
.thick { stroke-width: 1.500; }
.dash { fill: none; stroke: #000; stroke-dasharray: 5 4; }
.uce { fill: #78cdf5; stroke: #000; stroke-width: 1.200; }
.fa { font: 8.800px "DejaVu Sans", sans-serif; text-anchor: middle; fill: #1c2a33; }
.lbl { font: 11px "Liberation Sans", sans-serif; text-anchor: middle; fill: #000; }
.bold { font-weight: bold; }
.tip { fill: #ffffe1; stroke: #000; }
.tiptext { font: 14px "Noto Sans", "DejaVu Sans", sans-serif; fill: #000; }
.tipfa { font-size: 15px; }
.white { fill: #fff; }
.ico { fill: #fff; stroke: #000; stroke-width: 1.200; }
.ico-l { stroke: #000; stroke-width: 2; }
.gbox { fill: #fff; stroke: #c8c8c8; }
.gpath { fill: none; stroke: #999; stroke-width: 1.500; }
.bluebox { fill: #fff; stroke: #6a9cf0; }
.green { fill: #58b030; stroke: #2f7d1d; }
.gcorner { fill: none; stroke: #666; }
.gripbox { fill: #e2e2e2; stroke: #d0d0d0; }
.gripl { stroke: #808080; }
.sbar { fill: #f0f0f0; }
.sthumb { fill: #8c8c8c; }
.sedge { stroke: #85858f; }
.moveico { fill: #000; stroke: #000; }

.statusbar { height: 30px; background: linear-gradient(#fafbfb, #eff0f0); display: flex; align-items: flex-start; padding: 6px 26px 0 0; justify-content: flex-end; gap: 22px; flex: none; }
.mail { position: relative; width: 24px; height: 16px; margin-top: 5px; }
.mail svg { width: 24px; height: 16px; }
.mailbadge { position: absolute; left: 17px; top: 7px; width: 12px; height: 12px; border-radius: 50%; background: #f00; color: #fff; font: bold 9px/12px "Liberation Sans", sans-serif; text-align: center; }
.noteico { width: 18px; height: 22px; }
.gap { height: 3px; background: #fff; flex: none; }

.taskbar { height: 60px; background: #e1e1e1; border-top: 1px solid #bdbdbd; display: flex; align-items: center; position: relative; flex: none; }
.widgetico { width: 30px; height: 28px; margin-left: 26px; }
.center { display: flex; align-items: center; margin-left: 696px; gap: 25px; }
.tbi { width: 30px; height: 30px; }
.tbactive { width: 48px; height: 48px; margin-left: -9px; background: #f1f1f1; border-radius: 5px; position: relative; display: flex; justify-content: center; padding-top: 10px; }
.tbactive svg { width: 24px; height: 28px; }
.tbdot { position: absolute; left: 14px; bottom: 1px; width: 20px; height: 4px; border-radius: 2px; background: #0a6cd6; }
.tray { margin-left: auto; display: flex; align-items: center; padding-right: 24px; }
.tr-chev { width: 14px; height: 8px; margin-right: 23px; }
.tr-key { width: 20px; height: 14px; margin-right: 30px; }
.tr-fa { font: 13px "DejaVu Sans", sans-serif; color: #333; width: 16px; text-align: center; margin-right: 30px; }
.tr-wifi { width: 20px; height: 16px; margin-right: 10px; }
.tr-vol { width: 20px; height: 16px; margin-right: 10px; }
.tr-bat { width: 20px; height: 12px; margin-right: 23px; }
.clock { display: flex; flex-direction: column; align-items: flex-end; padding-bottom: 2px; font: 14px/19px "Noto Sans", sans-serif; color: #222; }
```
